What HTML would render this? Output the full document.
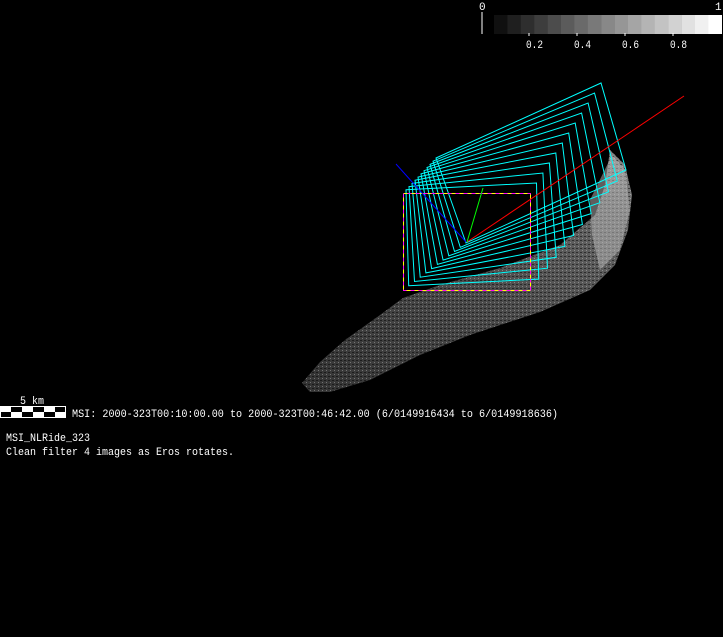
<!DOCTYPE html>
<html><head><meta charset="utf-8"><style>
html,body{margin:0;padding:0;background:#000;width:723px;height:637px;overflow:hidden}
svg{display:block}
text{font-family:"Liberation Mono",monospace;font-size:11px;fill:#fff}
</style></head><body>
<svg id="s" width="723" height="637" viewBox="0 0 723 637" xmlns="http://www.w3.org/2000/svg">
<defs>
<linearGradient id="g" x1="0" y1="1" x2="1" y2="0">
<stop offset="0" stop-color="#444"/>
<stop offset="0.5" stop-color="#666"/>
<stop offset="0.85" stop-color="#888"/>
<stop offset="1" stop-color="#bbb"/>
</linearGradient>
<pattern id="p" width="4" height="4" patternUnits="userSpaceOnUse">
<rect width="4" height="4" fill="#000" opacity="0"/>
<rect x="0" y="0" width="2" height="1" fill="#000" opacity="0.5"/>
<rect x="2" y="2" width="1" height="1" fill="#fff" opacity="0.3"/>
</pattern>
</defs>
<g id="cb"></g>
<line x1="482" y1="12" x2="482" y2="34" stroke="#fff"/>
<text x="479" y="10">0</text>
<text x="715" y="10">1</text>
<line x1="529" y1="33" x2="529" y2="36" stroke="#fff"/>
<line x1="577" y1="33" x2="577" y2="36" stroke="#fff"/>
<line x1="625" y1="33" x2="625" y2="36" stroke="#fff"/>
<line x1="673" y1="33" x2="673" y2="36" stroke="#fff"/>
<text x="526" y="48" textLength="17" lengthAdjust="spacingAndGlyphs">0.2</text>
<text x="574" y="48" textLength="17" lengthAdjust="spacingAndGlyphs">0.4</text>
<text x="622" y="48" textLength="17" lengthAdjust="spacingAndGlyphs">0.6</text>
<text x="670" y="48" textLength="17" lengthAdjust="spacingAndGlyphs">0.8</text>
<polygon points="302,383 320,362 345,340 380,315 403,298 440,285 500,268 560,245 595,215 605,185 610,150 625,165 632,195 628,230 615,265 590,290 540,312 470,335 420,355 370,380 330,392 310,392" fill="url(#g)" opacity="0.75"/>
<polygon points="302,383 320,362 345,340 380,315 403,298 440,285 500,268 560,245 595,215 605,185 610,150 625,165 632,195 628,230 615,265 590,290 540,312 470,335 420,355 370,380 330,392 310,392" fill="url(#p)"/>
<polygon points="590,200 612,155 625,170 630,210 620,250 600,270 592,235" fill="#bbb" opacity="0.5"/>
<g id="fr" fill="none" stroke="#0ff" stroke-width="1"></g>
<rect x="403.5" y="193.5" width="127" height="97" fill="none" stroke="#ff0" stroke-dasharray="4 4"/>
<rect x="403.5" y="193.5" width="127" height="97" fill="none" stroke="#f0f" stroke-dasharray="4 4" stroke-dashoffset="4"/>
<line x1="467" y1="242" x2="684" y2="96" stroke="#f00"/>
<line x1="396" y1="164" x2="466" y2="242" stroke="#00f"/>
<line x1="467" y1="242" x2="483" y2="188" stroke="#0f0"/>
<g id="sb"></g>
<text x="20" y="404" textLength="24" lengthAdjust="spacingAndGlyphs">5 km</text>
<text x="72" y="417" textLength="486" lengthAdjust="spacingAndGlyphs">MSI:  2000-323T00:10:00.00 to 2000-323T00:46:42.00 (6/0149916434 to 6/0149918636)</text>
<text x="6" y="441" textLength="84" lengthAdjust="spacingAndGlyphs">MSI_NLRide_323</text>
<text x="6" y="455" textLength="228" lengthAdjust="spacingAndGlyphs">Clean filter 4 images as Eros rotates.</text>
</svg>
<script>
var ns="http://www.w3.org/2000/svg",cb=document.getElementById('cb');
for(var i=0;i<17;i++){var r=document.createElementNS(ns,'rect');r.setAttribute('x',494+i*13.4);r.setAttribute('y',15);r.setAttribute('width',13.6);r.setAttribute('height',19);var v=Math.round(16+i*(239/16));r.setAttribute('fill','rgb('+v+','+v+','+v+')');cb.appendChild(r);}
var A=[[403,193],[530,193],[530,290],[403,290]],B=[[436,158],[601,83],[626,170],[466,243]],fr=document.getElementById('fr');
for(var k=1;k<=11;k++){var t=k/11,p=[];for(var j=0;j<4;j++)p.push((A[j][0]+(B[j][0]-A[j][0])*t).toFixed(1)+','+(A[j][1]+(B[j][1]-A[j][1])*t).toFixed(1));var q=document.createElementNS(ns,'polygon');q.setAttribute('points',p.join(' '));fr.appendChild(q);}
var sb=document.getElementById('sb');
for(var i=0;i<6;i++)for(var r=0;r<2;r++){var e=document.createElementNS(ns,'rect');e.setAttribute('x',i*11);e.setAttribute('y',406+r*6);e.setAttribute('width',11);e.setAttribute('height',6);e.setAttribute('fill',((i+r)%2==0)?'#fff':'#000');sb.appendChild(e);}
var o=document.createElementNS(ns,'rect');o.setAttribute('x',0.5);o.setAttribute('y',406.5);o.setAttribute('width',65);o.setAttribute('height',11);o.setAttribute('fill','none');o.setAttribute('stroke','#fff');sb.appendChild(o);
</script>
</body></html>
